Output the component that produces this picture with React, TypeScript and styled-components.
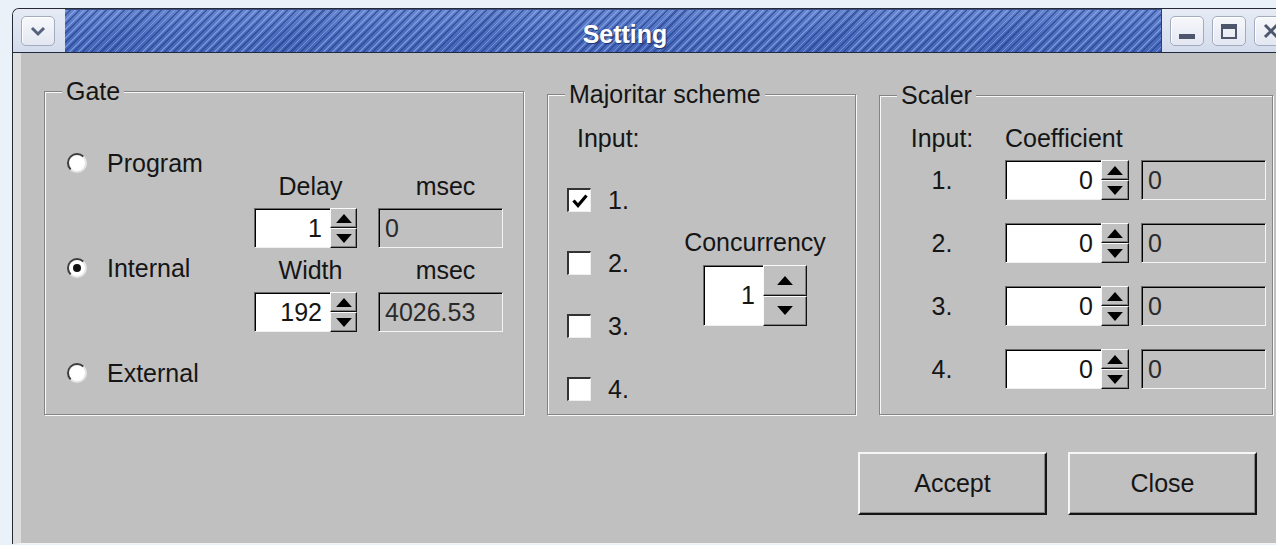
import React from 'react';
import styled, { createGlobalStyle } from 'styled-components';

const GlobalStyle = createGlobalStyle`
  html, body {
    margin: 0;
    padding: 0;
  }

  body {
    background: #ebf1f9;
    font-family: "Liberation Sans", Arial, sans-serif;
    color: #151515;
  }
`;

const Desktop = styled.div`
  width: 1276px;
  height: 545px;
  overflow: hidden;
  box-sizing: border-box;
  padding: 8px 0 0 12px;
  background: #ebf1f9;
`;

const Window = styled.div`
  width: 1300px;
  box-sizing: border-box;
  border-top: 1px solid #262a36;
  border-left: 1px solid #262a36;
  border-top-left-radius: 7px;
  overflow: hidden;
  display: flex;
  flex-direction: column;
`;

/* Title bar */

const TitleBar = styled.div`
  display: flex;
  height: 44px;
  box-sizing: border-box;
  border-bottom: 1px solid #1f2a45;
`;

const FrameCorner = styled.div<{ $width: number }>`
  width: ${props => props.$width}px;
  box-sizing: border-box;
  background: linear-gradient(180deg, #e6ebf5, #d3dbeb);
  display: flex;
  align-items: center;
  gap: 8px;
  padding-left: 8px;
`;

const Caption = styled.div`
  flex: 1;
  display: flex;
  align-items: center;
  justify-content: center;
  padding: 6px 0 0 24px;
  border-top: 1px solid #3a4f86;
  border-right: 1px solid #2d3f70;
  background:
    repeating-linear-gradient(-45deg, rgba(36, 60, 134, 0.6) 0 1.5px, transparent 1.5px 3px, rgba(146, 172, 230, 0.6) 3px 4.2px, transparent 4.2px 6.4px),
    linear-gradient(180deg, #6585cf, #4b6dbf 55%, #4466b8);
  color: #fff;
  font-size: 25px;
  font-weight: bold;
  text-shadow: 1px 1px 1px #1d2f63;
`;

const FrameButton = styled.div`
  width: 34px;
  height: 30px;
  box-sizing: border-box;
  border: 1px solid #a3abbf;
  border-radius: 5px;
  background: linear-gradient(180deg, #f7f8fc, #e3e7f1);
  box-shadow: inset 1px 1px 0 #fff;
  display: flex;
  align-items: center;
  justify-content: center;
`;

/* Window body */

const Body = styled.div`
  height: 491px;
  box-sizing: border-box;
  background: #c0c0c0;
  border-left: 8px solid #dedede;
  border-bottom: 1px solid #f4f4f4;
  padding: 25px 0 0 23px;
  display: flex;
  flex-direction: column;
`;

const GroupRow = styled.div`
  display: flex;
  gap: 23px;
  height: 337px;
`;

const GroupBox = styled.fieldset<{ $width: number; $drop?: number }>`
  flex: 0 0 auto;
  width: ${props => props.$width}px;
  box-sizing: border-box;
  min-width: 0;
  margin: ${props => props.$drop ?? 0}px 0 0 0;
  padding: 0;
  border: 1px solid #848484;
  box-shadow: inset 1px 1px 0 #f8f8f8, 1px 1px 0 #f8f8f8;
  display: flex;
  flex-direction: column;
`;

const GroupTitle = styled.legend`
  margin-left: 17px;
  padding: 0 4px;
  height: 26px;
  line-height: 26px;
  font-size: 25px;
  background: #c0c0c0;
`;

const Text = styled.span<{ $align?: 'left' | 'center' | 'right'; $shift?: number }>`
  display: block;
  height: 26px;
  line-height: 26px;
  font-size: 25px;
  white-space: nowrap;
  text-align: ${props => props.$align ?? 'left'};
  padding-left: ${props => props.$shift ?? 0}px;
`;

/* Gate */

const GateContent = styled.div`
  display: flex;
`;

const RadioColumn = styled.div`
  width: 209px;
  box-sizing: border-box;
  padding: 46px 0 0 22px;
  display: flex;
  flex-direction: column;
  gap: 79px;
`;

const RadioRow = styled.label`
  display: flex;
  align-items: center;
  gap: 20px;
  height: 26px;
  font-size: 25px;
`;

const RadioMark = styled.span<{ $on?: boolean }>`
  width: 20px;
  height: 20px;
  box-sizing: border-box;
  border-radius: 50%;
  border: 2px solid;
  border-color: #3c3c3c #e4e4e4 #e4e4e4 #3c3c3c;
  background: #fff;
  display: flex;
  align-items: center;
  justify-content: center;

  &::after {
    content: '';
    display: ${props => (props.$on ? 'block' : 'none')};
    width: 8px;
    height: 8px;
    border-radius: 50%;
    background: #111;
  }
`;

const TimingGrid = styled.div`
  display: grid;
  grid-template-columns: 103px 125px;
  grid-template-rows: 26px 40px 26px 40px;
  column-gap: 21px;
  row-gap: 9px;
  padding-top: 69px;
`;

/* Spin boxes and read-only fields */

const Spin = styled.div<{ $height: number }>`
  display: flex;
  height: ${props => props.$height}px;
`;

const SpinValue = styled.div<{ $width: number }>`
  width: ${props => props.$width}px;
  box-sizing: border-box;
  background: #fff;
  border-top: 1px solid #6a6a6a;
  border-left: 1px solid #6a6a6a;
  border-bottom: 1px solid #f0f0f0;
  box-shadow: inset 1px 1px 0 #000;
  display: flex;
  align-items: center;
  justify-content: flex-end;
  padding-right: 8px;
  font-size: 25px;
`;

const SpinArrows = styled.div<{ $width: number }>`
  width: ${props => props.$width}px;
  display: flex;
  flex-direction: column;
`;

const SpinStep = styled.div`
  flex: 1;
  box-sizing: border-box;
  background: #c0c0c0;
  border-top: 1px solid #fafafa;
  border-left: 1px solid #fafafa;
  border-right: 1px solid #111;
  border-bottom: 1px solid #111;
  box-shadow: inset -1px -1px 0 #808080;
  display: flex;
  align-items: center;
  justify-content: center;
`;

const ReadOut = styled.div`
  width: 125px;
  height: 40px;
  box-sizing: border-box;
  background: #c0c0c0;
  border-top: 1px solid #6a6a6a;
  border-left: 1px solid #6a6a6a;
  border-bottom: 1px solid #f4f4f4;
  border-right: 1px solid #f4f4f4;
  box-shadow: inset 1px 1px 0 #000;
  display: flex;
  align-items: center;
  padding-left: 6px;
  font-size: 25px;
  color: #2a2a2a;
`;

/* Majoritar scheme */

const MajContent = styled.div`
  display: flex;
  flex-direction: column;
`;

const MajHeading = styled(Text)`
  margin: 18px 0 0 29px;
`;

const MajBody = styled.div`
  display: flex;
  margin-top: 36px;
  padding-left: 19px;
`;

const CheckColumn = styled.div`
  width: 108px;
  display: flex;
  flex-direction: column;
  gap: 37px;
`;

const CheckRow = styled.label`
  display: flex;
  align-items: center;
  gap: 17px;
  height: 26px;
  font-size: 25px;
`;

const CheckMark = styled.span`
  width: 24px;
  height: 24px;
  box-sizing: border-box;
  background: #fff;
  border-top: 2px solid #333;
  border-left: 2px solid #333;
  border-right: 1px solid #eeeeee;
  border-bottom: 1px solid #eeeeee;
  display: flex;
  align-items: center;
  justify-content: center;
`;

const ConcurrencyColumn = styled.div`
  width: 160px;
  margin-top: 42px;
  display: flex;
  flex-direction: column;
  align-items: center;
  gap: 10px;
`;

/* Scaler */

const ScalerContent = styled.div`
  display: flex;
  flex-direction: column;
  padding-left: 10px;
`;

const ScalerLine = styled.div`
  display: grid;
  grid-template-columns: 104px 125px 125px;
  column-gap: 11px;
  align-items: center;
`;

const ScalerHead = styled(ScalerLine)`
  margin: 17px 0 9px;
`;

const ScalerRows = styled.div`
  display: flex;
  flex-direction: column;
  gap: 23px;
`;

/* Dialog buttons */

const ButtonRow = styled.div`
  display: flex;
  justify-content: flex-end;
  gap: 21px;
  margin-top: 37px;
  padding-right: 55px;
`;

const PushButton = styled.button`
  width: 189px;
  height: 63px;
  box-sizing: border-box;
  background: #c0c0c0;
  border-top: 2px solid #f6f6f6;
  border-left: 2px solid #f6f6f6;
  border-right: 2px solid #151515;
  border-bottom: 2px solid #151515;
  box-shadow: inset -1px -1px 0 #858585;
  font-family: "Liberation Sans", Arial, sans-serif;
  font-size: 25px;
  color: #151515;
  padding: 0;
`;

const Arrow = ({ up, size }: { up: boolean; size: number }) => (
  <svg width={size} height={size / 2 + 1} viewBox="0 0 14 8">
    <polygon points={up ? '7,0 14,8 0,8' : '0,0 14,0 7,8'} fill="#000" />
  </svg>
);

const SpinBox = ({ value, field, arrows, height, arrowSize }: {
  value: string;
  field: number;
  arrows: number;
  height: number;
  arrowSize: number;
}) => (
  <Spin $height={height}>
    <SpinValue $width={field}>{value}</SpinValue>
    <SpinArrows $width={arrows}>
      <SpinStep><Arrow up size={arrowSize} /></SpinStep>
      <SpinStep><Arrow up={false} size={arrowSize} /></SpinStep>
    </SpinArrows>
  </Spin>
);

const Tick = () => (
  <svg width="16" height="14" viewBox="0 0 16 14">
    <polyline points="1.5,6.5 6,11.5 14.5,1.5" fill="none" stroke="#000" strokeWidth="3.2" />
  </svg>
);

const scalerInputs = ['1.', '2.', '3.', '4.'];

export default function App() {
  return (
    <>
      <GlobalStyle />
      <Desktop>
        <Window>
          <TitleBar>
            <FrameCorner $width={52}>
              <FrameButton>
                <svg width="18" height="12" viewBox="0 0 18 12">
                  <polyline points="3,3 9,9 15,3" fill="none" stroke="#56617e" strokeWidth="3" />
                </svg>
              </FrameButton>
            </FrameCorner>
            <Caption>Setting</Caption>
            <FrameCorner $width={150}>
              <FrameButton>
                <svg width="20" height="20" viewBox="0 0 20 20">
                  <rect x="2" y="13" width="16" height="5" fill="#4d566c" />
                </svg>
              </FrameButton>
              <FrameButton>
                <svg width="20" height="20" viewBox="0 0 20 20">
                  <rect x="3" y="4" width="14" height="13" fill="none" stroke="#4d566c" strokeWidth="2" />
                  <rect x="3" y="4" width="14" height="4" fill="#4d566c" />
                </svg>
              </FrameButton>
              <FrameButton>
                <svg width="20" height="20" viewBox="0 0 20 20">
                  <path d="M4 4 L16 16 M16 4 L4 16" stroke="#4d566c" strokeWidth="3" />
                </svg>
              </FrameButton>
            </FrameCorner>
          </TitleBar>

          <Body>
            <GroupRow>
              <GroupBox $width={480}>
                <GroupTitle>Gate</GroupTitle>
                <GateContent>
                  <RadioColumn>
                    <RadioRow><RadioMark />Program</RadioRow>
                    <RadioRow><RadioMark $on />Internal</RadioRow>
                    <RadioRow><RadioMark />External</RadioRow>
                  </RadioColumn>
                  <TimingGrid>
                    <Text $align="center" $shift={10}>Delay</Text>
                    <Text $align="center" $shift={10}>msec</Text>
                    <SpinBox value="1" field={76} arrows={27} height={40} arrowSize={16} />
                    <ReadOut>0</ReadOut>
                    <Text $align="center" $shift={10}>Width</Text>
                    <Text $align="center" $shift={10}>msec</Text>
                    <SpinBox value="192" field={76} arrows={27} height={40} arrowSize={16} />
                    <ReadOut>4026.53</ReadOut>
                  </TimingGrid>
                </GateContent>
              </GroupBox>

              <GroupBox $width={309} $drop={3}>
                <GroupTitle>Majoritar scheme</GroupTitle>
                <MajContent>
                  <MajHeading>Input:</MajHeading>
                  <MajBody>
                    <CheckColumn>
                      {['1.', '2.', '3.', '4.'].map((n, i) => (
                        <CheckRow key={n}>
                          <CheckMark>{i === 0 && <Tick />}</CheckMark>
                          {n}
                        </CheckRow>
                      ))}
                    </CheckColumn>
                    <ConcurrencyColumn>
                      <Text $align="center">Concurrency</Text>
                      <SpinBox value="1" field={60} arrows={44} height={61} arrowSize={16} />
                    </ConcurrencyColumn>
                  </MajBody>
                </MajContent>
              </GroupBox>

              <GroupBox $width={394} $drop={4}>
                <GroupTitle>Scaler</GroupTitle>
                <ScalerContent>
                  <ScalerHead>
                    <Text $align="center">Input:</Text>
                    <Text>Coefficient</Text>
                  </ScalerHead>
                  <ScalerRows>
                    {scalerInputs.map(n => (
                      <ScalerLine key={n}>
                        <Text $align="center">{n}</Text>
                        <SpinBox value="0" field={96} arrows={28} height={40} arrowSize={16} />
                        <ReadOut>0</ReadOut>
                      </ScalerLine>
                    ))}
                  </ScalerRows>
                </ScalerContent>
              </GroupBox>
            </GroupRow>

            <ButtonRow>
              <PushButton>Accept</PushButton>
              <PushButton>Close</PushButton>
            </ButtonRow>
          </Body>
        </Window>
      </Desktop>
    </>
  );
}
